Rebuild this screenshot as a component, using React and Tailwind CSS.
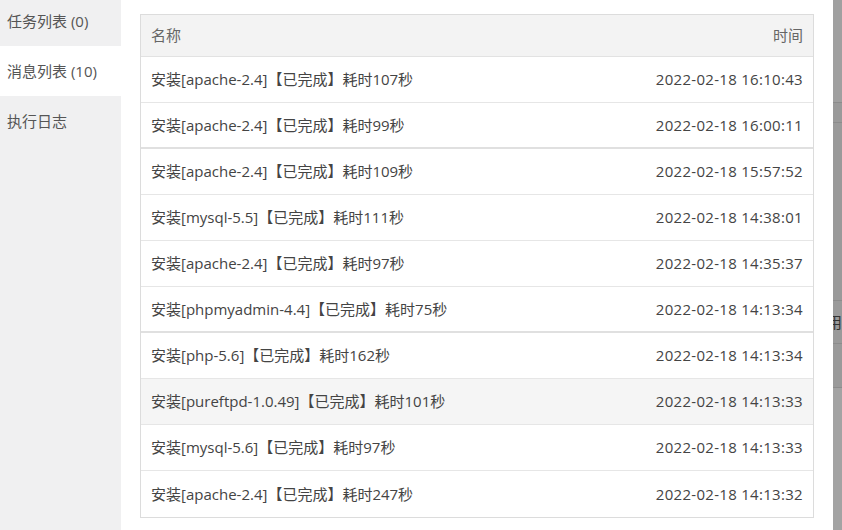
import React from 'react';

const tabs = [
  { label: '任务列表 (0)', active: false },
  { label: '消息列表 (10)', active: true },
  { label: '执行日志', active: false },
];

const rows = [
  { name: '安装[apache-2.4]【已完成】耗时107秒', time: '2022-02-18 16:10:43' },
  { name: '安装[apache-2.4]【已完成】耗时99秒', time: '2022-02-18 16:00:11', thick: true },
  { name: '安装[apache-2.4]【已完成】耗时109秒', time: '2022-02-18 15:57:52' },
  { name: '安装[mysql-5.5]【已完成】耗时111秒', time: '2022-02-18 14:38:01' },
  { name: '安装[apache-2.4]【已完成】耗时97秒', time: '2022-02-18 14:35:37' },
  { name: '安装[phpmyadmin-4.4]【已完成】耗时75秒', time: '2022-02-18 14:13:34', thick: true },
  { name: '安装[php-5.6]【已完成】耗时162秒', time: '2022-02-18 14:13:34' },
  { name: '安装[pureftpd-1.0.49]【已完成】耗时101秒', time: '2022-02-18 14:13:33', hover: true },
  { name: '安装[mysql-5.6]【已完成】耗时97秒', time: '2022-02-18 14:13:33' },
  { name: '安装[apache-2.4]【已完成】耗时247秒', time: '2022-02-18 14:13:32', last: true },
];

const font = { fontFamily: '"Open Sans", "Noto Sans CJK SC", sans-serif' };

export default function App() {
  return (
    <div className="flex h-[530px] w-[842px] overflow-hidden bg-white text-[15px]" style={font}>
      {/* side tabs */}
      <div className="w-[121px] shrink-0 bg-[#f0f0f1]">
        <div className="-mt-[4px]">
          {tabs.map((t) => (
            <div
              key={t.label}
              className={`flex h-[50px] items-center pl-[7px] text-[#555] ${t.active ? 'bg-white' : ''}`}
            >
              {t.label}
            </div>
          ))}
        </div>
      </div>

      {/* message table */}
      <div className="w-[712px] shrink-0 bg-white pl-[19px] pt-[14px]">
        <div className="w-[674px] border border-[#dcdcdc]">
          <div className="flex h-[42px] items-center justify-between border-b border-[#e2e2e2] bg-[#f3f3f3] px-[10px] text-[#666]">
            <span>名称</span>
            <span>时间</span>
          </div>
          {rows.map((r) => (
            <div
              key={r.name + r.time}
              className={`flex h-[46px] items-center justify-between px-[10px] text-[#444] ${
                r.last ? '' : r.thick ? 'border-b-2 border-[#e0e0e0]' : 'border-b border-[#e6e6e6]'
              } ${r.hover ? 'bg-[#f5f5f5]' : ''}`}
            >
              <span>{r.name}</span>
              <span className="tracking-[0.3px]">{r.time}</span>
            </div>
          ))}
        </div>
      </div>

      {/* dimmed page behind */}
      <div className="flex flex-1 flex-col bg-[#9a9a9a]">
        <div className="h-[103px] border-b border-[#8c8c8c] bg-[#a0a0a0]" />
        <div className="h-[20px] border-b border-[#8c8c8c]" />
        <div className="h-[178px] border-b border-[#8c8c8c]" />
        <div className="flex h-[43px] items-center overflow-hidden border-b border-[#8c8c8c] text-[#333]">
          <span className="-ml-[6px]">用</span>
        </div>
        <div className="h-[44px] border-b border-[#8c8c8c]" />
        <div className="flex-1 bg-[#a3a3a3]" />
      </div>
    </div>
  );
}
